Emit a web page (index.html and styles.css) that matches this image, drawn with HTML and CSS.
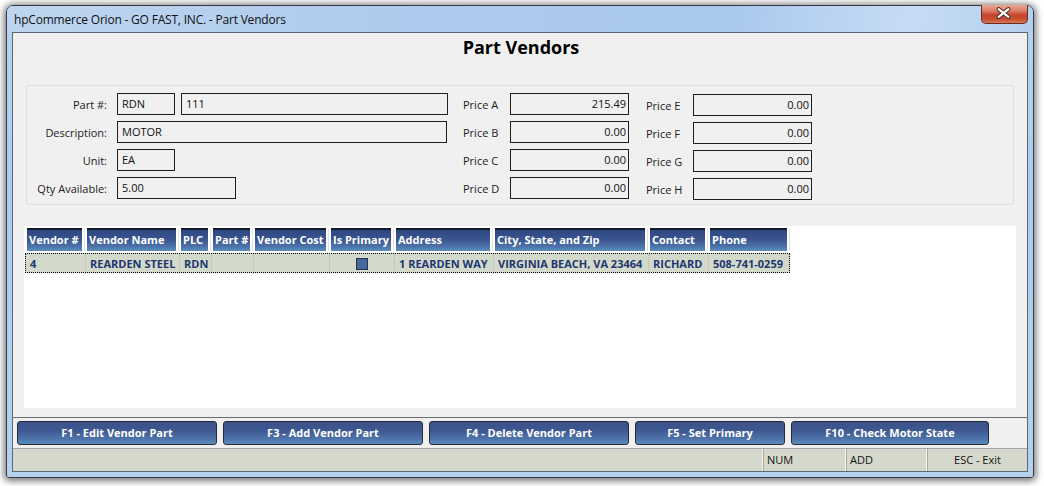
FILE: index.html
```html
<!DOCTYPE html>
<html>
<head>
<meta charset="utf-8">
<title>Part Vendors</title>
<link rel="stylesheet" href="styles.css">
</head>
<body>
<div class="window">
  <div class="titlebar">
    <span class="title">hpCommerce Orion - GO FAST, INC. - Part Vendors</span>
    <div class="close">
      <svg width="47" height="19" viewBox="0 0 47 19">
        <path d="M18 5 L28 13 M28 5 L18 13" stroke="#4a2a24" stroke-width="4.2" stroke-linecap="round" fill="none"/>
        <path d="M18 5 L28 13 M28 5 L18 13" stroke="#ffffff" stroke-width="2.2" stroke-linecap="round" fill="none"/>
      </svg>
    </div>
  </div>
  <div class="client">
    <h1 class="heading">Part Vendors</h1>
    <div class="group">
      <div class="part-fields">
        <span class="lbl">Part #:</span>
        <div class="pair"><div class="box w58">RDN</div><div class="box w267">111</div></div>
        <span class="lbl">Description:</span>
        <div class="box w330">MOTOR</div>
        <span class="lbl">Unit:</span>
        <div class="box w58">EA</div>
        <span class="lbl">Qty Available:</span>
        <div class="box w119">5.00</div>
      </div>
      <div class="prices">
        <span class="plbl">Price A</span><div class="box num">215.49</div>
        <span class="plbl">Price B</span><div class="box num">0.00</div>
        <span class="plbl">Price C</span><div class="box num">0.00</div>
        <span class="plbl">Price D</span><div class="box num">0.00</div>
      </div>
      <div class="prices second">
        <span class="plbl">Price E</span><div class="box num">0.00</div>
        <span class="plbl">Price F</span><div class="box num">0.00</div>
        <span class="plbl">Price G</span><div class="box num">0.00</div>
        <span class="plbl">Price H</span><div class="box num">0.00</div>
      </div>
    </div>
    <div class="grid">
      <div class="table">
        <div class="th"><span>Vendor #</span></div>
        <div class="th"><span>Vendor Name</span></div>
        <div class="th"><span>PLC</span></div>
        <div class="th"><span>Part #</span></div>
        <div class="th"><span>Vendor Cost</span></div>
        <div class="th"><span>Is Primary</span></div>
        <div class="th"><span>Address</span></div>
        <div class="th"><span>City, State, and Zip</span></div>
        <div class="th"><span>Contact</span></div>
        <div class="th"><span>Phone</span></div>
        <div class="row">
          <div class="td">4</div>
          <div class="td">REARDEN STEEL</div>
          <div class="td">RDN</div>
          <div class="td"></div>
          <div class="td"></div>
          <div class="td center"><span class="check"></span></div>
          <div class="td">1 REARDEN WAY</div>
          <div class="td">VIRGINIA BEACH, VA 23464</div>
          <div class="td">RICHARD</div>
          <div class="td">508-741-0259</div>
        </div>
      </div>
    </div>
    <div class="buttons">
      <button class="btn w200">F1 - Edit Vendor Part</button>
      <button class="btn w200">F3 - Add Vendor Part</button>
      <button class="btn w200">F4 - Delete Vendor Part</button>
      <button class="btn w150">F5 - Set Primary</button>
      <button class="btn w198">F10 - Check Motor State</button>
    </div>
    <div class="status">
      <div class="s-main"></div>
      <div class="s-panel s-num">NUM</div>
      <div class="s-panel s-add">ADD</div>
      <div class="s-panel s-esc">ESC - Exit</div>
    </div>
  </div>
</div>
</body>
</html>
```

FILE: styles.css
```css
html, body {
  margin: 0;
  width: 1044px;
  height: 486px;
  overflow: hidden;
  background: #ffffff;
}

body {
  box-sizing: border-box;
  padding: 5px 0 0 6px;
  font-family: "Open Sans", "Noto Sans", sans-serif;
  font-size: 11px;
  color: #111;
}

.window {
  box-sizing: border-box;
  width: 1028px;
  height: 473px;
  border: 1px solid #363b42;
  border-radius: 7px 7px 3px 3px;
  padding: 0 5px 5px;
  background: linear-gradient(180deg, #b9d2ee 0%, #aecaed 40%, #b7d0ee 100%);
  box-shadow: 0 1px 7px 2px rgba(0, 0, 0, 0.55);
  display: flex;
  flex-direction: column;
}

.titlebar {
  height: 26px;
  flex: none;
  display: flex;
  align-items: center;
  margin: 0 -5px;
  padding: 0 5px;
  border-radius: 6px 6px 0 0;
  background: linear-gradient(100deg, #bed5ef 0%, #afcbee 35%, #a9c8ee 70%, #c7dcf5 88%, #b4cfee 100%);
}

.title {
  padding-left: 2px;
  padding-top: 1px;
  font-size: 12px;
  letter-spacing: -0.2px;
  color: #111;
}

.close {
  margin-left: auto;
  align-self: flex-start;
  margin-top: -1px;
  width: 47px;
  height: 19px;
  box-sizing: border-box;
  border: 1px solid #6b2b22;
  border-top: none;
  border-radius: 0 0 5px 5px;
  background: linear-gradient(180deg, #e9a898 0%, #d9785f 35%, #c4432c 55%, #c8502f 80%, #d97b56 100%);
  display: flex;
  align-items: center;
  justify-content: center;
}

.close svg {
  display: block;
  margin-left: -1px;
  margin-top: -1px;
}

.client {
  flex: 1;
  border: 1px solid #5a6878;
  background: #f0f0f0;
  display: flex;
  flex-direction: column;
}

.heading {
  margin: 0;
  height: 52px;
  flex: none;
  line-height: 28px;
  text-align: center;
  font-size: 18px;
  font-weight: 700;
  color: #000;
  padding-left: 2px;
}

.group {
  flex: none;
  box-sizing: border-box;
  height: 120px;
  margin: 0 13px;
  border: 1px solid #d5dfe9;
  border-radius: 3px;
  padding-top: 7px;
  display: flex;
  align-items: flex-start;
}

.part-fields {
  display: grid;
  grid-template-columns: 80px auto;
  column-gap: 10px;
  row-gap: 6px;
  align-items: center;
}

.lbl {
  text-align: right;
  color: #1a1a1a;
}

.pair {
  display: flex;
  gap: 6px;
}

.box {
  box-sizing: border-box;
  height: 22px;
  border: 1px solid #1e1e1e;
  padding: 0 4px;
  line-height: 20px;
  color: #111;
  white-space: nowrap;
}

.w58 { width: 58px; }
.w267 { width: 267px; }
.w330 { width: 330px; }
.w119 { width: 119px; }

.prices {
  margin-left: 15px;
  display: grid;
  grid-template-columns: 47px 119px;
  row-gap: 6px;
  align-items: center;
}

.prices.second {
  margin-top: 1px;
  margin-left: 17px;
}

.plbl {
  color: #1a1a1a;
}

.box.num {
  width: 119px;
  text-align: right;
  padding-right: 2px;
}

.grid {
  flex: none;
  height: 182px;
  margin: 21px 11px 0;
  background: #ffffff;
  padding: 2px 0 0 1px;
  box-sizing: border-box;
}

.table {
  display: grid;
  grid-template-columns: 60px 94px 32px 42px 76px 65px 99px 155px 60px 82px;
  grid-template-rows: 23px 20px;
  row-gap: 2px;
  width: 765px;
}

.th {
  border-right: 1px solid #e2e2e2;
  padding: 0 2px;
  display: flex;
}

.th span {
  flex: 1;
  box-sizing: border-box;
  border-top: 2px solid #141a26;
  background: linear-gradient(180deg, #2f4781 0%, #3a5590 45%, #4c74aa 80%, #5b8cc0 100%);
  color: #ffffff;
  font-weight: 700;
  font-size: 11px;
  line-height: 20px;
  padding-left: 2px;
  white-space: nowrap;
  overflow: hidden;
}

.row {
  grid-column: 1 / -1;
  display: grid;
  grid-template-columns: 60px 94px 32px 42px 76px 65px 99px 155px 60px 82px;
  background: #d3dacb;
  outline: 1px dotted #000;
  outline-offset: -1px;
}

.td {
  padding-left: 4px;
  line-height: 21px;
  font-weight: 700;
  color: #1e3670;
  white-space: nowrap;
  border-left: 1px dotted #b5b8ae;
}

.td:first-child {
  border-left: none;
  padding-left: 5px;
}

.td.center {
  display: flex;
  align-items: center;
  justify-content: center;
  padding-left: 0;
}

.check {
  width: 12px;
  height: 12px;
  box-sizing: border-box;
  border: 1px solid #26344e;
  background: #48679a;
  margin-top: 1px;
}

.buttons {
  flex: none;
  margin-top: 9px;
  border-top: 1px solid #696c70;
  border-bottom: 1px solid #a4a6a8;
  padding: 3px 0 3px 4px;
  display: flex;
  gap: 6px;
}

.btn {
  height: 24px;
  box-sizing: border-box;
  border: 1px solid #272b33;
  border-radius: 3px;
  background: linear-gradient(180deg, #3b5088 0%, #3f5993 40%, #4d72a8 75%, #5b8bbe 100%);
  color: #ffffff;
  font-family: "Open Sans", "Noto Sans", sans-serif;
  font-weight: 700;
  font-size: 11px;
  line-height: 20px;
  padding: 0 0 1px;
}

.w200 { width: 200px; }
.w150 { width: 150px; }
.w198 { width: 198px; }

.status {
  flex: 1;
  background: #d4d9cb;
  display: flex;
  line-height: 21px;
  color: #111;
}

.s-main {
  flex: 1;
}

.s-panel {
  box-sizing: border-box;
  border-left: 1px solid #a9ac9f;
  box-shadow: -1px 0 0 #f4f5ef;
  margin-left: 2px;
}

.s-num {
  width: 81px;
  padding-left: 3px;
}

.s-add {
  width: 80px;
  padding-left: 3px;
}

.s-esc {
  width: 100px;
  margin-left: 1px;
  text-align: center;
}
```
